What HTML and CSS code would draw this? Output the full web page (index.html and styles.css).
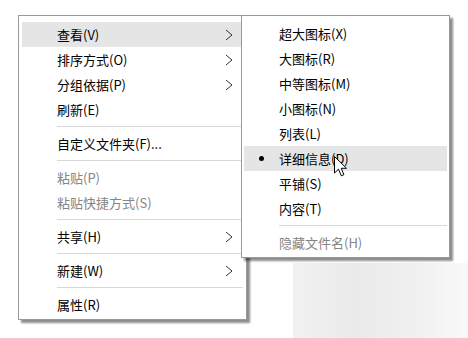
FILE: index.html
```html
<!DOCTYPE html>
<html lang="zh-CN">
<head>
	<meta charset="UTF-8">
	<title>右键菜单 - 查看</title>
	<link rel="stylesheet" href="styles.css">
</head>

<body>
	<div class="desk">
		<!-- 主菜单 -->
		<div class="menu menu-main">
			<div class="menu-item menu-item-on">
				<span class="menu-text">查看(V)</span>
				<svg class="menu-arrow" width="8" height="12" viewBox="0 0 8 12"><polyline points="1,1 7,6 1,11" /></svg>
			</div>
			<div class="menu-item">
				<span class="menu-text">排序方式(O)</span>
				<svg class="menu-arrow" width="8" height="12" viewBox="0 0 8 12"><polyline points="1,1 7,6 1,11" /></svg>
			</div>
			<div class="menu-item">
				<span class="menu-text">分组依据(P)</span>
				<svg class="menu-arrow" width="8" height="12" viewBox="0 0 8 12"><polyline points="1,1 7,6 1,11" /></svg>
			</div>
			<div class="menu-item">
				<span class="menu-text">刷新(E)</span>
			</div>
			<div class="menu-sep"></div>
			<div class="menu-item">
				<span class="menu-text">自定义文件夹(F)...</span>
			</div>
			<div class="menu-sep"></div>
			<div class="menu-item menu-item-off">
				<span class="menu-text">粘贴(P)</span>
			</div>
			<div class="menu-item menu-item-off">
				<span class="menu-text">粘贴快捷方式(S)</span>
			</div>
			<div class="menu-sep"></div>
			<div class="menu-item">
				<span class="menu-text">共享(H)</span>
				<svg class="menu-arrow" width="8" height="12" viewBox="0 0 8 12"><polyline points="1,1 7,6 1,11" /></svg>
			</div>
			<div class="menu-sep"></div>
			<div class="menu-item">
				<span class="menu-text">新建(W)</span>
				<svg class="menu-arrow" width="8" height="12" viewBox="0 0 8 12"><polyline points="1,1 7,6 1,11" /></svg>
			</div>
			<div class="menu-sep"></div>
			<div class="menu-item">
				<span class="menu-text">属性(R)</span>
			</div>
		</div>

		<!-- 子菜单：查看 -->
		<div class="menu menu-sub">
			<div class="menu-item"><span class="menu-mark"></span><span class="menu-text">超大图标(X)</span></div>
			<div class="menu-item"><span class="menu-mark"></span><span class="menu-text">大图标(R)</span></div>
			<div class="menu-item"><span class="menu-mark"></span><span class="menu-text">中等图标(M)</span></div>
			<div class="menu-item"><span class="menu-mark"></span><span class="menu-text">小图标(N)</span></div>
			<div class="menu-item"><span class="menu-mark"></span><span class="menu-text">列表(L)</span></div>
			<div class="menu-item menu-item-on"><span class="menu-mark"><i class="menu-dot"></i></span><span class="menu-text">详细信息(D)</span></div>
			<div class="menu-item"><span class="menu-mark"></span><span class="menu-text">平铺(S)</span></div>
			<div class="menu-item"><span class="menu-mark"></span><span class="menu-text">内容(T)</span></div>
			<div class="menu-sep"></div>
			<div class="menu-item menu-item-off"><span class="menu-mark"></span><span class="menu-text">隐藏文件名(H)</span></div>
		</div>

		<!-- 鼠标指针 -->
		<svg class="cursor" width="14" height="22" viewBox="0 0 14 22">
			<path d="M0.5 0.5 V17 L4.5 13.2 L7.3 19.8 L9.9 18.7 L7.2 12.3 H12.5 Z" />
		</svg>
	</div>
</body>
</html>
```

FILE: styles.css
```css
body {
	margin: 0;
	padding: 0;
	background: #fff;
	font-family: "Noto Sans CJK SC", "Microsoft YaHei", sans-serif;
	font-size: 13px;
	color: #000;
}

.desk {
	width: 468px;
	height: 338px;
	position: relative;
	overflow: hidden;
	background: linear-gradient(90deg, #f1f1f1 0%, #eaeaea 35%, #f0f0f0 70%, #f9f9f9 100%) no-repeat 293px 263px / 175px 75px;
}

.menu {
	position: absolute;
	top: 15px;
	background: #fff;
	border: 1px solid #999;
	box-shadow: 3px 3px 2px rgba(0, 0, 0, 0.45);
}

.menu-main {
	left: 18px;
	width: 221px;
	padding: 6px 3px 2px 3px;
}

.menu-sub {
	left: 241px;
	width: 203px;
	padding: 5px 2px 2px 2px;
	z-index: 2;
}

.menu-item {
	height: 25px;
	line-height: 25px;
	display: flex;
	align-items: center;
	padding: 0 10px 0 35px;
	white-space: nowrap;
}

.menu-sub .menu-item {
	padding-left: 0;
}

.menu-item-on {
	background: #e5e5e5;
}

.menu-item-off {
	color: #858585;
}

.menu-text {
	flex: 1;
}

.menu-arrow {
	display: block;
}

.menu-arrow polyline {
	fill: none;
	stroke: #333;
	stroke-width: 1;
}

.menu-mark {
	width: 35px;
	display: flex;
	justify-content: center;
}

.menu-dot {
	width: 5px;
	height: 5px;
	border-radius: 50%;
	background: #000;
}

.menu-sep {
	height: 1px;
	margin: 4px 0 4px 35px;
	background: #d9d9d9;
}

.cursor {
	position: absolute;
	left: 334px;
	top: 156px;
	z-index: 3;
}

.cursor path {
	fill: #fff;
	stroke: #000;
	stroke-width: 1;
	stroke-linejoin: miter;
}
```
